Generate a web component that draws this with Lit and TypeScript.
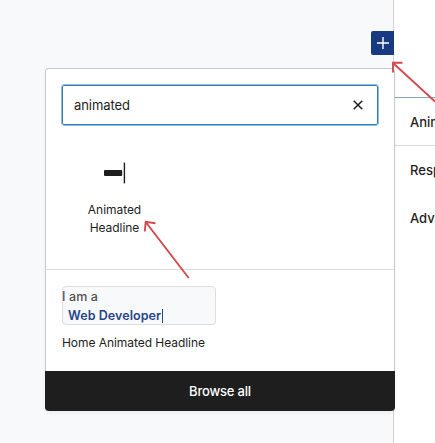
import { LitElement, html, css } from "lit";
import { customElement } from "lit/decorators.js";

@customElement("block-inserter")
export class BlockInserter extends LitElement {
  static styles = css`
    :host {
      display: flex;
      flex-direction: column;
      box-sizing: border-box;
      width: 350px;
      height: 343px;
      background: #fff;
      border: 1px solid #c9c9c9;
      border-bottom: 0;
      border-radius: 4px;
      box-shadow: 0 2px 4px rgba(0, 0, 0, 0.05);
    }
    .search {
      box-sizing: border-box;
      display: flex;
      align-items: center;
      justify-content: space-between;
      height: 40px;
      margin: 16px 16px 0 16px;
      padding: 0 13px 0 11px;
      border: 1px solid #2f7fb8;
      outline: 1px solid #8fbbdc;
      outline-offset: -0.5px;
      border-radius: 2px;
      font-size: 13px;
      letter-spacing: -0.08px;
    }
    .clear {
      width: 12px;
      height: 12px;
    }
    .results {
      flex: none;
      box-sizing: border-box;
      height: 145px;
      padding: 37px 0 0 16px;
      border-bottom: 1px solid #ddd;
    }
    .block {
      width: 105px;
      text-align: center;
      font-size: 12px;
      line-height: 18px;
      letter-spacing: -0.05px;
    }
    .block svg {
      display: block;
      margin: 0 auto 17px;
    }
    .patterns {
      flex: 1;
      padding: 16px 16px 0;
    }
    .preview {
      box-sizing: border-box;
      width: 154px;
      height: 39px;
      border: 1px solid #dcdee0;
      border-radius: 4px;
      background: #f8f9fb;
      font-size: 12.5px;
      line-height: 19px;
      color: #505050;
      font-weight: 500;
    }
    .lead {
      margin-left: -1px;
      letter-spacing: 0.1px;
    }
    .typed {
      display: flex;
      align-items: center;
      margin-left: 5px;
      color: #26468b;
      font-weight: 600;
      letter-spacing: 0.06px;
    }
    .caret {
      width: 1px;
      height: 14px;
      margin-left: 1px;
      background: #26468b;
    }
    .name {
      margin-top: 9px;
      font-size: 12px;
      line-height: 18px;
      letter-spacing: -0.05px;
    }
    .browse {
      height: 40px;
      margin: 0 -1px;
      border: 0;
      padding: 0;
      border-radius: 0 0 4px 4px;
      background: #1e1e1e;
      color: #fff;
      font: 500 13px/40px Inter, sans-serif;
      letter-spacing: -0.2px;
      text-align: center;
    }
  `;
  render() {
    return html`
      <div class="search">
        <span>animated</span>
        <svg class="clear" viewBox="0 0 12 12" fill="none" stroke="#1e1e1e" stroke-width="1.5">
          <path d="M1.7 1.7 10.3 10.3M10.3 1.7 1.7 10.3" />
        </svg>
      </div>
      <div class="results">
        <div class="block">
          <svg width="24" height="22" viewBox="0 0 24 22" fill="#1e1e1e">
            <rect x="1" y="8" width="18.2" height="6" rx="1" />
            <rect x="20.7" y="0.6" width="1.4" height="20.8" />
          </svg>
          <div>Animated</div>
          <div>Headline</div>
        </div>
      </div>
      <div class="patterns">
        <div class="preview">
          <div class="lead">I am a</div>
          <div class="typed">Web Developer<span class="caret"></span></div>
        </div>
        <div class="name">Home Animated Headline</div>
      </div>
      <button class="browse">Browse all</button>
    `;
  }
}

@customElement("app-root")
export class AppRoot extends LitElement {
  static styles = css`
    :host {
      position: relative;
      display: flex;
      width: 435px;
      height: 443px;
      overflow: hidden;
      background: #f8f9fb;
      color: #1e1e1e;
      font-family: Inter, sans-serif;
    }
    .canvas {
      flex: none;
      box-sizing: border-box;
      width: 393px;
      padding-top: 31px;
      display: flex;
      justify-content: flex-end;
      align-items: flex-start;
    }
    .add {
      display: grid;
      place-items: center;
      width: 23px;
      height: 24px;
      margin-right: -1px;
      border-radius: 2px 0 0 2px;
      background: #173a80;
      z-index: 1;
    }
    .settings {
      flex: 1;
      display: flex;
      flex-direction: column;
      box-sizing: border-box;
      padding-top: 97px;
      border-left: 1px solid #d2d2d2;
      background: #fff;
      font-size: 13px;
      font-weight: 500;
      white-space: nowrap;
      overflow: hidden;
    }
    .section {
      box-sizing: border-box;
      height: 48px;
      padding-left: 16px;
      line-height: 49px;
    }
    .first {
      border-top: 1px solid #86a5bd;
    }
    .ruled {
      border-top: 1px solid #ddd;
    }
    .last {
      line-height: 51px;
    }
    block-inserter {
      position: absolute;
      left: 45px;
      top: 68px;
      z-index: 2;
    }
    .arrows {
      position: absolute;
      inset: 0;
      z-index: 3;
      pointer-events: none;
    }
  `;
  render() {
    return html`
      <div class="canvas">
        <div class="add">
          <svg width="14" height="14" viewBox="0 0 14 14" stroke="#fff" stroke-width="1.4">
            <path d="M7 1v12M1 7h12" />
          </svg>
        </div>
      </div>
      <div class="settings">
        <div class="section first">Animated Headline</div>
        <div class="section ruled">Responsive</div>
        <div class="section last">Advanced</div>
      </div>
      <block-inserter></block-inserter>
      <svg class="arrows" width="435" height="443" viewBox="0 0 435 443" fill="none" stroke="#d34a4d" stroke-width="1.9">
        <path d="M435 101.5 393 63M402.5 62.7H393V72.5" />
        <path d="M188.7 278 145.7 222M155.5 223.2 145.7 221.8 144.8 231.5" />
      </svg>
    `;
  }
}
